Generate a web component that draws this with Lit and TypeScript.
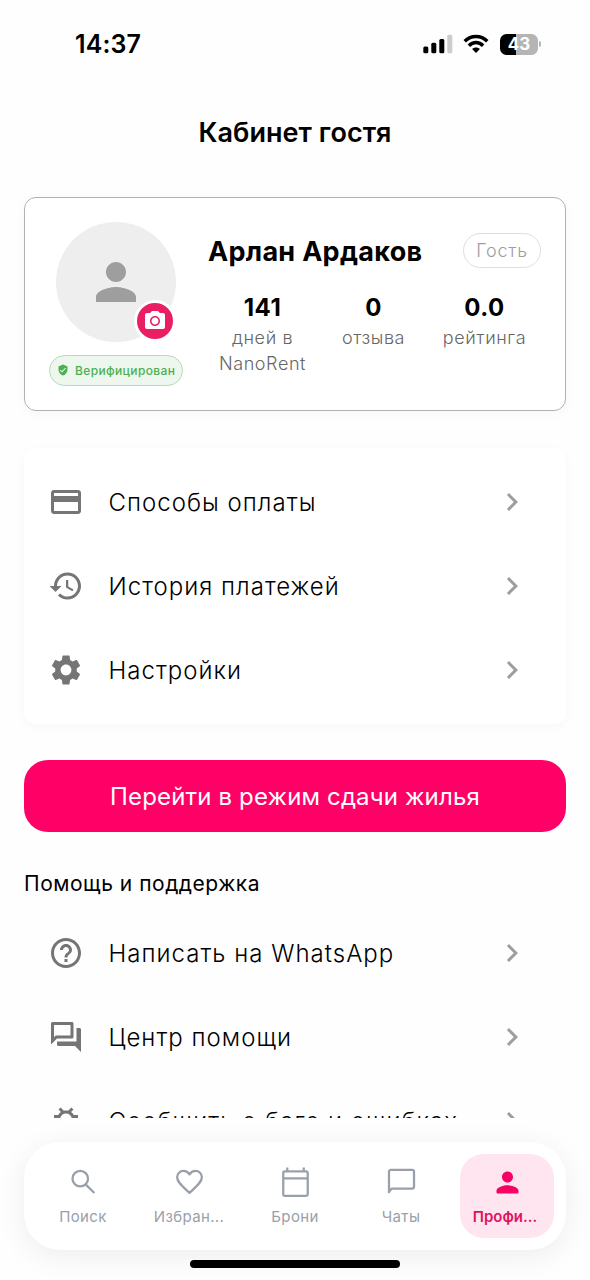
import { LitElement, html, css, svg } from "lit";
import { customElement, property } from "lit/decorators.js";

const ICONS: Record<string, string> = {
  person: "M12 12c2.21 0 4-1.79 4-4s-1.79-4-4-4-4 1.79-4 4 1.79 4 4 4zm0 2c-2.67 0-8 1.34-8 4v2h16v-2c0-2.66-5.33-4-8-4z",
  personRounded: "M12 12c2.21 0 4-1.79 4-4s-1.79-4-4-4-4 1.79-4 4 1.79 4 4 4zm0 2c-2.67 0-8 1.34-8 4v1c0 .55.45 1 1 1h14c.55 0 1-.45 1-1v-1c0-2.66-5.33-4-8-4z",
  camera: "M20 4h-3.170L15 2H9L7.170 4H4c-1.100 0-2 .900-2 2v12c0 1.100.900 2 2 2h16c1.100 0 2-.900 2-2V6c0-1.100-.900-2-2-2zm-8 13c-2.760 0-5-2.240-5-5s2.240-5 5-5 5 2.240 5 5-2.240 5-5 5zm0-1.500c1.930 0 3.500-1.570 3.500-3.500S13.930 8.500 12 8.500 8.500 10.070 8.500 12s1.570 3.500 3.500 3.500z",
  verified: "M12 1L3 5v6c0 5.55 3.84 10.74 9 12 5.16-1.26 9-6.45 9-12V5l-9-4zm-2 16l-4-4 1.41-1.41L10 14.17l6.59-6.59L18 9l-8 8z",
  card: "M20 4H4c-1.11 0-1.99.89-1.99 2L2 18c0 1.11.89 2 2 2h16c1.11 0 2-.89 2-2V6c0-1.110-.890-2-2-2zm0 14H4v-6h16v6zm0-10H4V6h16v2z",
  history: "M13 3c-4.970 0-9 4.030-9 9H1l3.890 3.890.070.140L9 12H6c0-3.870 3.130-7 7-7s7 3.130 7 7-3.130 7-7 7c-1.930 0-3.680-.790-4.940-2.060l-1.420 1.420C8.270 19.990 10.510 21 13 21c4.970 0 9-4.030 9-9s-4.030-9-9-9zm-1 5v5l4.280 2.540.720-1.210-3.500-2.080V8H12z",
  settings: "M19.14 12.94c.04-.3.06-.61.06-.94 0-.32-.02-.64-.07-.94l2.030-1.580c.180-.140.230-.410.120-.610l-1.920-3.320c-.120-.220-.370-.290-.590-.220l-2.390.960c-.500-.380-1.030-.700-1.620-.940l-.360-2.540c-.040-.240-.240-.410-.480-.410h-3.840c-.240 0-.430.170-.470.410l-.360 2.540c-.590.240-1.130.570-1.620.940l-2.390-.960c-.220-.080-.470 0-.590.220L2.740 8.870c-.120.210-.080.470.120.610l2.030 1.580c-.050.300-.090.630-.090.940s.020.640.070.940l-2.030 1.580c-.180.140-.230.410-.120.610l1.920 3.320c.120.220.370.290.590.220l2.390-.960c.500.380 1.030.700 1.620.940l.360 2.540c.050.240.240.410.480.410h3.840c.240 0 .440-.170.470-.410l.360-2.540c.590-.240 1.130-.560 1.620-.940l2.390.960c.220.080.470 0 .590-.220l1.920-3.320c.120-.220.070-.470-.120-.610l-2.010-1.580zM12 15.600c-1.980 0-3.600-1.620-3.600-3.600s1.620-3.600 3.600-3.600 3.600 1.620 3.600 3.600-1.620 3.600-3.600 3.600z",
  help: "M11 18h2v-2h-2v2zm1-16C6.480 2 2 6.480 2 12s4.480 10 10 10 10-4.480 10-10S17.520 2 12 2zm0 18c-4.410 0-8-3.590-8-8s3.590-8 8-8 8 3.590 8 8-3.590 8-8 8zm0-14c-2.210 0-4 1.790-4 4h2c0-1.100.900-2 2-2s2 .900 2 2c0 2-3 1.750-3 5h2c0-2.250 3-2.500 3-5 0-2.210-1.790-4-4-4z",
  forum: "M15 4v7H5.170L4 12.170V4h11m1-2H3c-.550 0-1 .450-1 1v14l4-4h10c.550 0 1-.450 1-1V3c0-.550-.450-1-1-1zm5 4h-2v9H6v2c0 .550.450 1 1 1h11l4 4V7c0-.550-.450-1-1-1z",
  bug: "M20 8h-2.810c-.450-.780-1.070-1.450-1.820-1.960L17 4.410 15.590 3l-2.170 2.170C12.960 5.060 12.490 5 12 5s-.960.060-1.410.170L8.410 3 7 4.410l1.620 1.630C7.880 6.550 7.260 7.220 6.810 8H4v2h2.090c-.050.330-.090.660-.090 1v1H4v2h2v1c0 .340.040.670.090 1H4v2h2.810c1.040 1.790 2.970 3 5.190 3s4.150-1.210 5.190-3H20v-2h-2.090c.050-.330.090-.660.090-1v-1h2v-2h-2v-1c0-.340-.040-.670-.090-1H20V8zm-4 7c0 2.210-1.790 4-4 4s-4-1.790-4-4v-4c0-2.210 1.790-4 4-4s4 1.790 4 4v4z",
  chevron: "M10 6L8.590 7.410 13.170 12l-4.580 4.590L10 18l6-6z",
};

const LINE_ICONS: Record<string, string> = {
  search: "M15.300 9.200a5.650 5.650 0 1 1-11.300 0a5.650 5.650 0 1 1 11.300 0zM13.900 13.700l6 5.900",
  heart: "M12 19.600l-1.200-1.100C6.300 14.300 3 11.500 3 8.200 3 5.600 5.100 3.600 7.600 3.600c1.700 0 3.400.900 4.400 2.500 1-1.600 2.700-2.500 4.400-2.500C18.900 3.600 21 5.600 21 8.200c0 3.300-3.300 6.100-7.800 10.300z",
  calendar: "M4.300 3.900h15.400a1.200 1.200 0 0 1 1.200 1.200v15.400a1.200 1.200 0 0 1-1.200 1.200H4.300a1.200 1.200 0 0 1-1.200-1.200V5.100a1.200 1.200 0 0 1 1.200-1.200zM3.100 9h17.800M6 1v3M18 1v3",
  chat: "M2.900 19V4.200a1.300 1.300 0 0 1 1.300-1.300h15.600a1.300 1.300 0 0 1 1.300 1.300v10.900a1.300 1.300 0 0 1-1.300 1.300H4.800z",
};

@customElement("ui-icon")
class UiIcon extends LitElement {
  @property() name = "";
  static styles = css`
    :host { display: block; flex: none; }
    svg { display: block; width: 100%; height: 100%; fill: currentColor; }
    .line { fill: none; stroke: currentColor; stroke-width: 1.650; stroke-linejoin: round; }
  `;
  render() {
    const line = LINE_ICONS[this.name];
    return html`<svg viewBox="0 0 24 24">
      ${line ? svg`<path class="line" d=${line}></path>` : svg`<path d=${ICONS[this.name] ?? ""}></path>`}
    </svg>`;
  }
}

@customElement("status-bar")
class StatusBar extends LitElement {
  static styles = css`
    :host { display: flex; justify-content: space-between; align-items: center; height: 88px; padding: 0 49px 0 75px; box-sizing: border-box; color: #000; }
    .time { font-size: 25px; font-weight: 600; letter-spacing: 0.100px; }
    .icons { display: flex; align-items: center; }
    svg { display: block; }
    .signal { margin-right: 10px; }
    .wifi { margin-right: 11px; }
    .battery { display: flex; align-items: center; gap: 1px; }
    .body { width: 38px; height: 21px; border-radius: 6.500px; background: linear-gradient(90deg, #000 43%, #b5b5b5 43%); color: #fff; font-size: 17px; font-weight: 700; line-height: 21px; text-align: center; }
    .tip { width: 2px; height: 6px; border-radius: 0 2px 2px 0; background: #b5b5b5; }
  `;
  render() {
    return html`
      <div class="time">14:37</div>
      <div class="icons">
        <svg class="signal" width="30" height="20" viewBox="0 0 30 20">
          <rect x="0.300" y="12.500" width="5" height="6.800" rx="1.500"></rect>
          <rect x="8.300" y="8.800" width="5" height="10.500" rx="1.500"></rect>
          <rect x="16.300" y="5" width="5" height="14.300" rx="1.500"></rect>
          <rect x="24.300" y="0.800" width="5" height="18.500" rx="1.500" fill="#ccc"></rect>
        </svg>
        <svg class="wifi" width="26" height="20" viewBox="0 0 26 20" fill="none" stroke="#000" stroke-width="3.400">
          <path d="M1.700 7.300C8 .800 18 .800 24.300 7.300"></path>
          <path d="M5.900 11.700c4.100-4.200 10.100-4.200 14.200 0"></path>
          <path d="M13 19l-3.900-4c2.300-2 5.500-2 7.800 0z" fill="#000" stroke="none"></path>
        </svg>
        <div class="battery"><div class="body">43</div><div class="tip"></div></div>
      </div>`;
  }
}

@customElement("profile-card")
class ProfileCard extends LitElement {
  static styles = css`
    :host { display: flex; box-sizing: border-box; height: 214px; margin: 0 24px; padding: 24px 24px 0; border: 1.500px solid #b1b1b1; border-radius: 12px; background: #fff; box-shadow: 0 3px 12px rgba(0, 0, 0, 0.03); }
    .left { width: 134px; display: flex; flex-direction: column; align-items: center; flex: none; }
    .avatar { position: relative; width: 120px; height: 120px; border-radius: 50%; background: #eee; display: flex; align-items: center; justify-content: center; color: #9e9e9e; }
    .avatar > .who { width: 60px; height: 60px; }
    .cam { position: absolute; right: 0; bottom: 0; width: 36px; height: 36px; border: 3px solid #fff; border-radius: 50%; background: #e91e63; color: #fff; display: flex; align-items: center; justify-content: center; }
    .cam ui-icon { width: 24px; height: 24px; }
    .badge { margin-top: 12.500px; width: 134px; height: 31.500px; box-sizing: border-box; border: 1.500px solid #b5dcb7; border-radius: 18px; background: #edf7ed; color: #4caf50; display: flex; align-items: center; padding-left: 7px; gap: 6px; font-size: 12px; font-weight: 500; letter-spacing: 0.360px; white-space: nowrap; }
    .badge ui-icon { width: 12px; height: 12px; }
    .badge span { padding-top: 1px; }
    .right { flex: 1; padding: 10px 0 0 25px; display: flex; flex-direction: column; }
    .top { display: flex; align-items: center; justify-content: space-between; height: 36px; }
    .name { font-size: 27px; font-weight: 700; letter-spacing: 0.300px; color: #000; white-space: nowrap; padding-top: 3px; }
    .role { box-sizing: border-box; width: 78px; height: 35px; border: 1.500px solid #dedede; border-radius: 18px; color: #9e9e9e; font-size: 18px; line-height: 33px; letter-spacing: 0.750px; text-align: center; font-weight: 300; }
    .stats { display: grid; grid-template-columns: 111px 111px 111px; margin: 21px 0 0 -1px; text-align: center; }
    .num { font-size: 24px; line-height: 37px; height: 36px; font-weight: 700; letter-spacing: 0.500px; color: #000; }
    .lbl { font-size: 18px; line-height: 25.500px; font-weight: 300; letter-spacing: 0.600px; color: #666; }
  `;
  render() {
    const stats = [["141", "дней в NanoRent"], ["0", "отзыва"], ["0.0", "рейтинга"]];
    return html`
      <div class="left">
        <div class="avatar">
          <ui-icon class="who" name="person"></ui-icon>
          <div class="cam"><ui-icon name="camera"></ui-icon></div>
        </div>
        <div class="badge"><ui-icon name="verified"></ui-icon><span>Верифицирован</span></div>
      </div>
      <div class="right">
        <div class="top"><div class="name">Арлан Ардаков</div><div class="role">Гость</div></div>
        <div class="stats">
          ${stats.map(([n, l]) => html`<div><div class="num">${n}</div><div class="lbl">${l}</div></div>`)}
        </div>
      </div>`;
  }
}

@customElement("menu-row")
class MenuRow extends LitElement {
  @property() icon = "";
  @property() label = "";
  static styles = css`
    :host { display: flex; align-items: center; height: 84px; padding: 0 36px 0 24px; }
    .lead { width: 36px; height: 36px; color: #757575; }
    .label { flex: 1; margin-left: 24.500px; padding-top: 1px; font-size: 24px; font-weight: 300; letter-spacing: 1.020px; color: #000; white-space: nowrap; }
    .chev { width: 36px; height: 36px; color: #9e9e9e; }
  `;
  render() {
    return html`<ui-icon class="lead" name=${this.icon}></ui-icon>
      <span class="label">${this.label}</span>
      <ui-icon class="chev" name="chevron"></ui-icon>`;
  }
}

@customElement("tab-bar")
class TabBar extends LitElement {
  static styles = css`
    :host { display: flex; box-sizing: border-box; height: 108px; margin: 24px 24px 0; padding: 12px 6px; border-radius: 36px; background: #fff; box-shadow: 0 6px 30px rgba(0, 0, 0, 0.07); }
    .tab { flex: 1; margin: 0 6px; border-radius: 24px; display: flex; flex-direction: column; align-items: center; padding-top: 12px; color: #9aa0a9; }
    .tab ui-icon { width: 33px; height: 33px; }
    .text { margin-top: 8px; font-size: 15px; line-height: 20px; font-weight: 400; letter-spacing: 0.350px; }
    .active { background: #ffe5ef; color: #f60265; }
    .active .text { font-weight: 600; color: #e0115f; letter-spacing: 0; padding-right: 4px; }
  `;
  render() {
    const tabs = [["search", "Поиск"], ["heart", "Избран..."], ["calendar", "Брони"], ["chat", "Чаты"], ["personRounded", "Профи..."]];
    return html`${tabs.map(([i, t], n) => html`<div class="tab ${n === 4 ? "active" : ""}">
      <ui-icon name=${i}></ui-icon><span class="text">${t}</span></div>`)}`;
  }
}

@customElement("app-root")
class AppRoot extends LitElement {
  static styles = css`
    :host { display: flex; flex-direction: column; width: 590px; height: 1280px; overflow: hidden; background: #fefefe; font-family: Inter, "Liberation Sans", sans-serif; }
    h1 { margin: 0; height: 89px; line-height: 89px; text-align: center; font-size: 27px; font-weight: 600; color: #000; letter-spacing: 0.050px; }
    .content { height: 941px; overflow: hidden; padding-top: 20px; box-sizing: border-box; }
    .menu { margin: 37px 24px 36px; padding: 12px 0; border-radius: 12px; background: #fff; box-shadow: 0 3px 12px rgba(0, 0, 0, 0.03); }
    .switch { margin: 0 24px; height: 72px; line-height: 73px; border-radius: 24px; background: #ff0066; color: #fff; text-align: center; font-size: 24px; letter-spacing: 0.150px; }
    h2 { margin: 37px 24px 12px; font-size: 21px; line-height: 30px; font-weight: 400; letter-spacing: 0.520px; color: #000; }
    .help { margin: 0 24px; }
    .home { width: 210px; height: 8px; margin: 10px auto 0; border-radius: 4px; background: #000; }
  `;
  render() {
    return html`
      <status-bar></status-bar>
      <h1>Кабинет гостя</h1>
      <div class="content">
        <profile-card></profile-card>
        <div class="menu">
          <menu-row icon="card" label="Способы оплаты"></menu-row>
          <menu-row icon="history" label="История платежей"></menu-row>
          <menu-row icon="settings" label="Настройки"></menu-row>
        </div>
        <div class="switch">Перейти в режим сдачи жилья</div>
        <h2>Помощь и поддержка</h2>
        <div class="help">
          <menu-row icon="help" label="Написать на WhatsApp"></menu-row>
          <menu-row icon="forum" label="Центр помощи"></menu-row>
          <menu-row icon="bug" label="Сообщить о баге и ошибках"></menu-row>
        </div>
      </div>
      <tab-bar></tab-bar>
      <div class="home"></div>`;
  }
}
